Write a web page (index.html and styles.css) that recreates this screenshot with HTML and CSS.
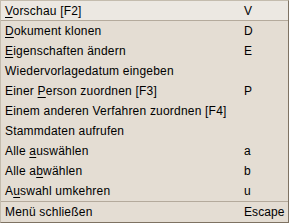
FILE: index.html
```html
<!DOCTYPE html>
<html>
<head>
<meta charset="utf-8">
<link rel="stylesheet" href="styles.css">
</head>
<body>
<div class="menu">
  <div class="item active"><span class="label"><u>V</u>orschau [F2]</span><span class="key">V</span></div>
  <div class="sep"></div>
  <div class="item"><span class="label"><u>D</u>okument klonen</span><span class="key">D</span></div>
  <div class="item"><span class="label"><u>E</u>igenschaften ändern</span><span class="key">E</span></div>
  <div class="item"><span class="label">Wiedervorlagedatum eingeben</span><span class="key"></span></div>
  <div class="item"><span class="label">Einer <u>P</u>erson zuordnen [F3]</span><span class="key">P</span></div>
  <div class="item"><span class="label">Einem anderen Verfahren zuordnen [F4]</span><span class="key"></span></div>
  <div class="item"><span class="label">Stammdaten aufrufen</span><span class="key"></span></div>
  <div class="item"><span class="label">Alle <u>a</u>uswählen</span><span class="key">a</span></div>
  <div class="item"><span class="label">Alle a<u>b</u>wählen</span><span class="key">b</span></div>
  <div class="item"><span class="label">A<u>u</u>swahl umkehren</span><span class="key">u</span></div>
  <div class="sep"></div>
  <div class="item last"><span class="label">Menü schließen</span><span class="key">Escape</span></div>
</div>
</body>
</html>
```
FILE: styles.css
```css
html, body {
  margin: 0;
  padding: 0;
  background: #e4ddd3;
}
.menu {
  box-sizing: border-box;
  width: 289px;
  height: 223px;
  border: 1px solid;
  border-color: #c4bcae #7e7262 #7e7262 #c4bcae;
  background: #e4ddd3;
  font-family: "Liberation Sans", Arial, sans-serif;
  font-size: 12px;
  color: #000;
  display: flex;
  flex-direction: column;
}
.item {
  height: 20px;
  display: flex;
  align-items: center;
  padding-left: 4px;
  letter-spacing: 0.2px;
}
.item.active {
  height: 19px;
  background: #ece8e2;
}
.item.last {
  flex: 1;
}
.label {
  flex: 1;
  white-space: nowrap;
}
.key {
  width: 44px;
  letter-spacing: 0.1px;
}
u {
  text-decoration: underline;
  text-underline-offset: 2px;
}
.sep {
  height: 1px;
  background: #b4aa9c;
}
```
